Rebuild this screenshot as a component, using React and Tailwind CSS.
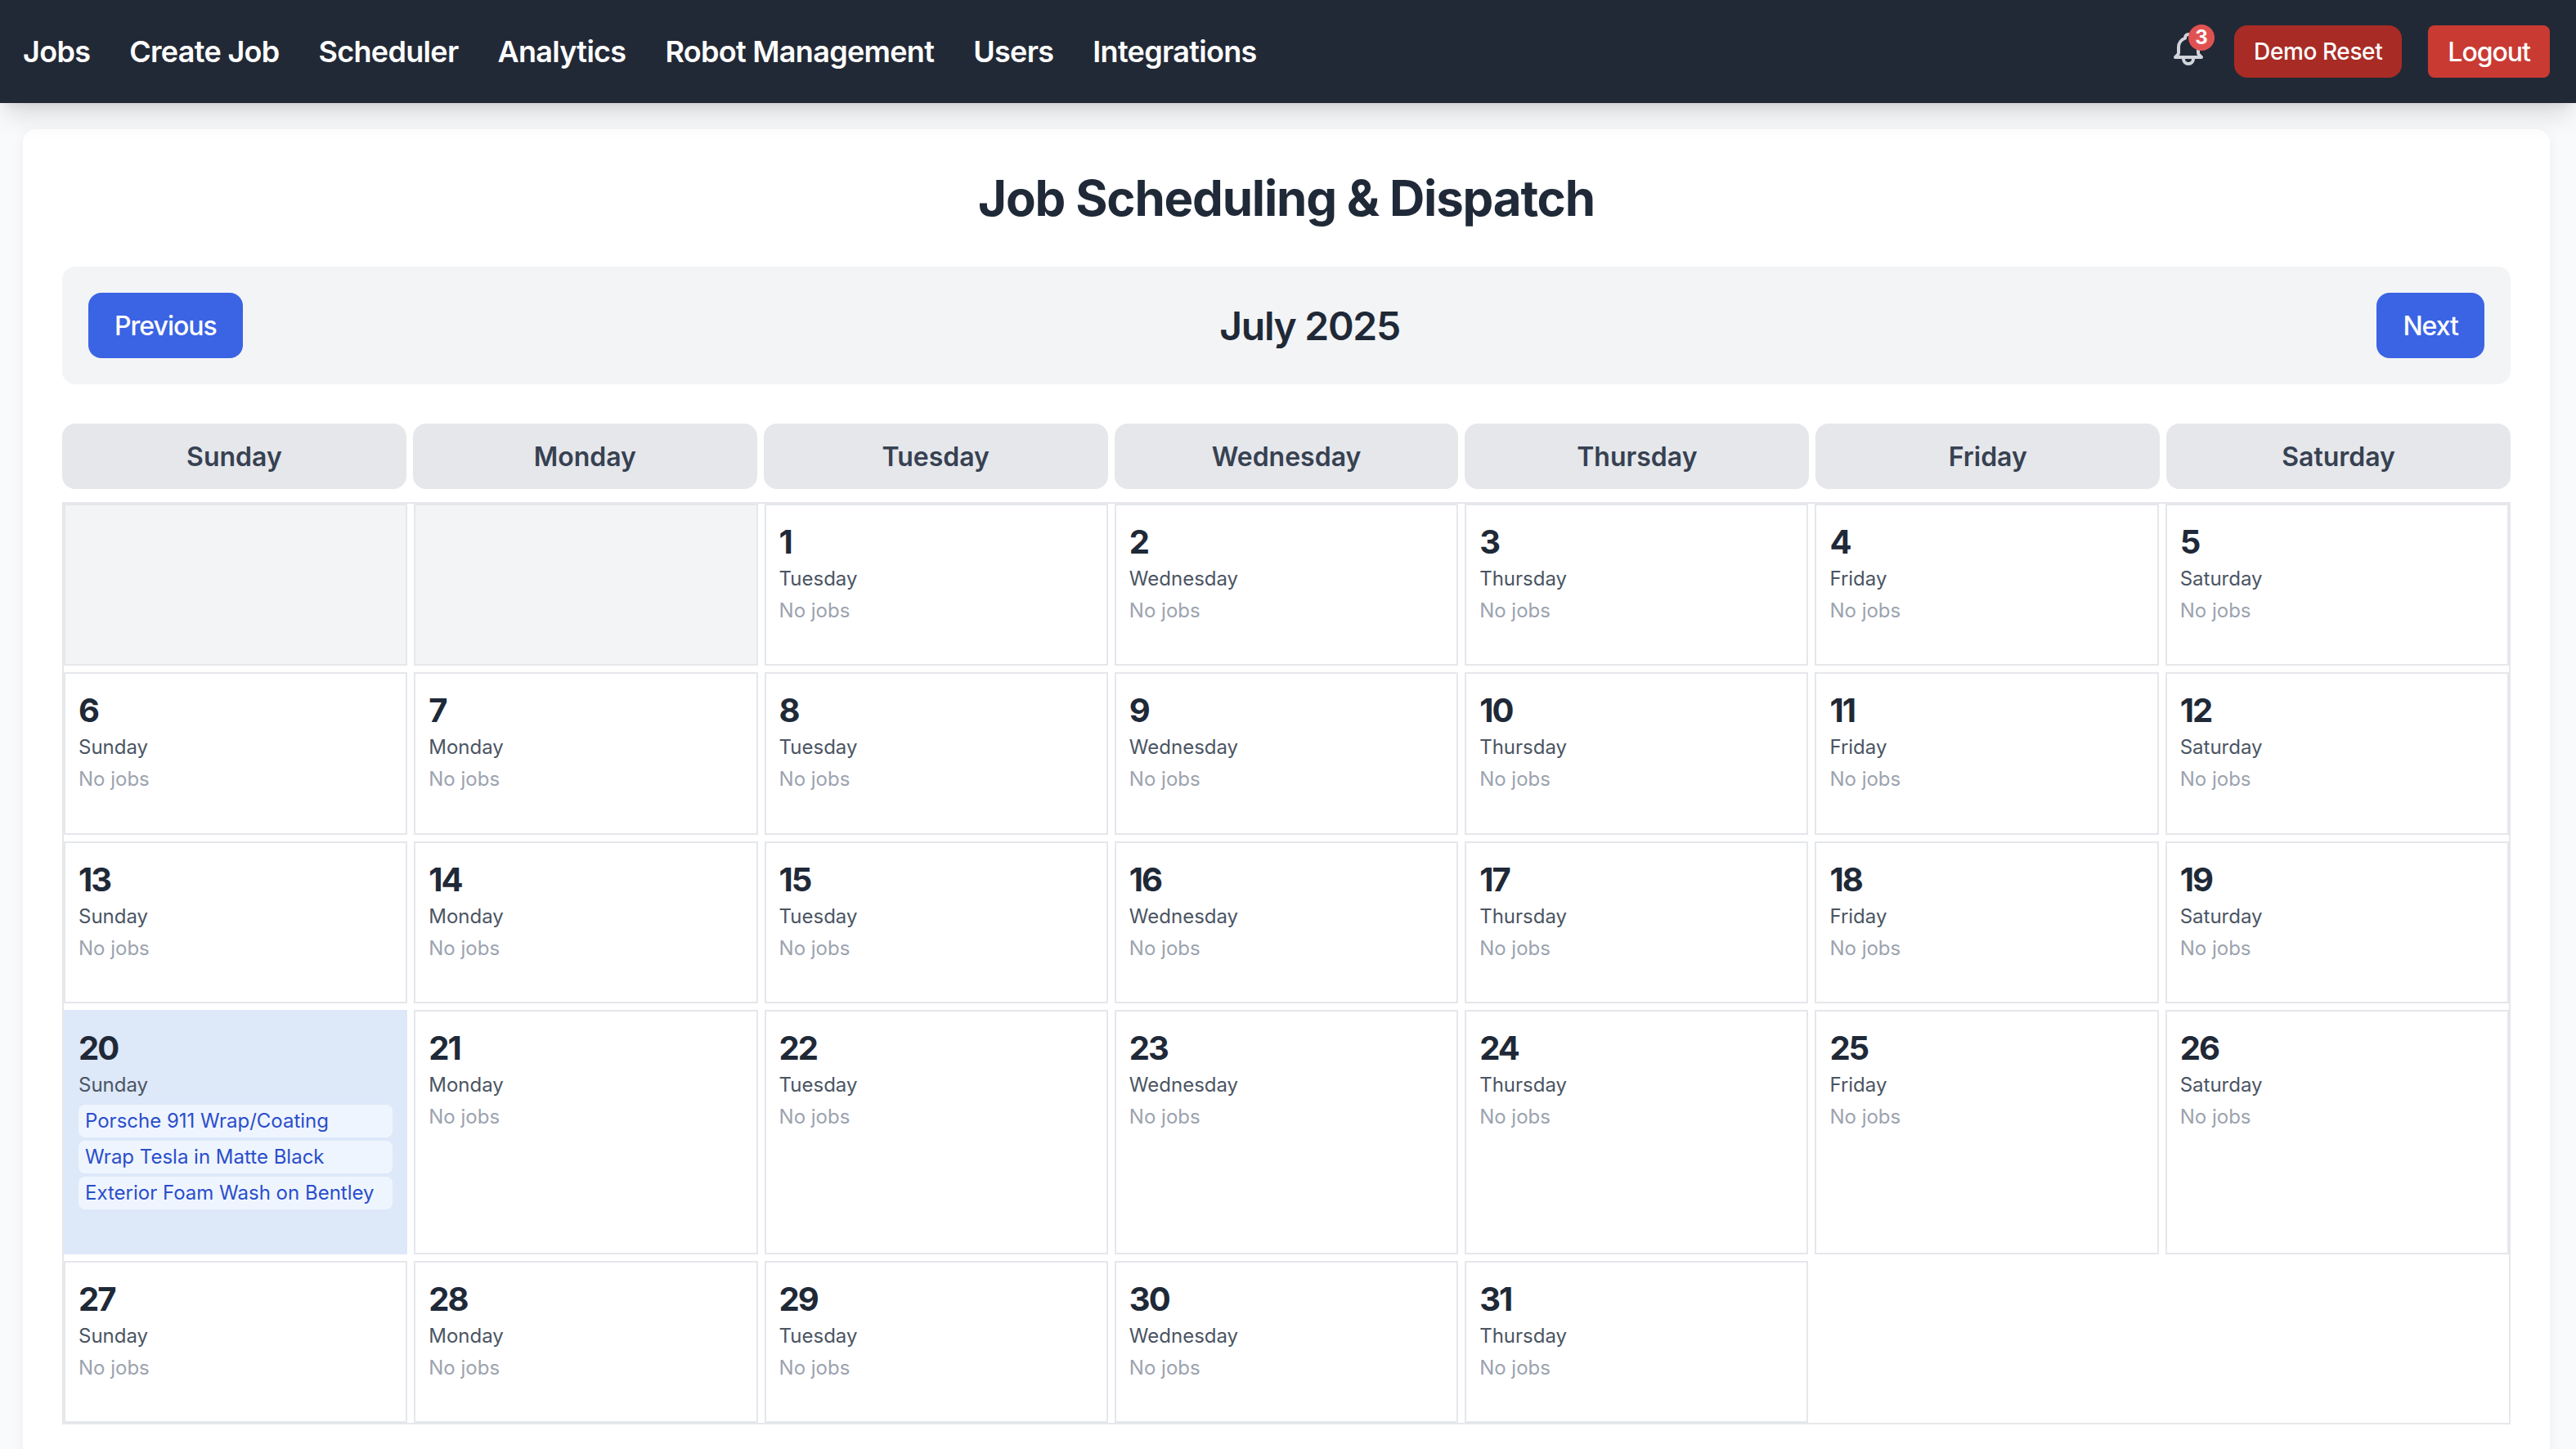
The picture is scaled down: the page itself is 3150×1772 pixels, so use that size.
import React from 'react';

const navLinks = ['Jobs', 'Create Job', 'Scheduler', 'Analytics', 'Robot Management', 'Users', 'Integrations'];
const weekDays = ['Sunday', 'Monday', 'Tuesday', 'Wednesday', 'Thursday', 'Friday', 'Saturday'];
const jobsByDate = {
  20: ['Porsche 911 Wrap/Coating', 'Wrap Tesla in Matte Black', 'Exterior Foam Wash on Bentley'],
};

function Navbar() {
  return (
    <nav className="flex h-[126px] items-center justify-between bg-[#222936] pl-[28px] pr-[32px] shadow-[0_20px_30px_-6px_rgba(0,0,0,0.13),0_8px_12px_-8px_rgba(0,0,0,0.1)] relative">
      <div className="flex items-center gap-[48px]">
        {navLinks.map((link) => (
          <a key={link} className="text-[36px] leading-[56px] font-semibold tracking-[-0.7px] text-white">{link}</a>
        ))}
      </div>
      <div className="flex items-center gap-[32px]">
        <div className="relative h-[48px] w-[48px] -translate-y-[3px]">
          <svg viewBox="0 0 24 24" fill="none" stroke="#d1d5db" strokeWidth="2" strokeLinecap="round" strokeLinejoin="round" className="h-[48px] w-[48px]">
            <path d="M15 17h5l-1.405-1.405A2.032 2.032 0 0118 14.158V11a6.002 6.002 0 00-4-5.659V5a2 2 0 10-4 0v.341C7.67 6.165 6 8.388 6 11v3.159c0 .538-.214 1.055-.595 1.436L4 17h5m6 0v1a3 3 0 11-6 0v-1m6 0H9" />
          </svg>
          <span className="absolute right-[-8px] top-[-6px] flex h-[32px] w-[32px] items-center justify-center rounded-full bg-[#e05252] text-[24px] font-bold leading-none text-white">3</span>
        </div>
        <button className="h-[64px] rounded-[16px] bg-[#a82c25] px-[24px] text-[28px] font-medium leading-[40px] tracking-[-0.4px] text-white">Demo Reset</button>
        <button className="h-[64px] rounded-[8px] bg-[#c93a32] px-[24px] pt-[2px] text-[32px] font-medium leading-[48px] tracking-[-1px] text-white">Logout</button>
      </div>
    </nav>
  );
}

function DayCell({ date }) {
  if (!date) {
    return <div className="min-h-[198.4px] border-2 border-[#e5e7eb] bg-[#f3f4f6]" />;
  }
  const jobs = jobsByDate[date] || [];
  const dayName = weekDays[(date + 1) % 7];
  const hasJobs = jobs.length > 0;
  return (
    <div className={hasJobs ? 'min-h-[298.8px] border-2 border-[#dde8f9] bg-[#dde8f9] p-[16px]' : 'min-h-[198.4px] border-2 border-[#e5e7eb] bg-white p-[16px]'}>
      <div className="pt-[1px] text-[40px] font-bold leading-[56px] tracking-[-2px] text-[#1f2937]">{date}</div>
      <div className="mt-[1px] text-[24px] leading-[32px] text-[#4b5563]">{dayName}</div>
      {hasJobs ? (
        <div className="mt-[8px] flex flex-col gap-[4px]">
          {jobs.map((job) => (
            <div key={job} className="rounded-[8px] bg-[#eff5fe] px-[8px] py-[4px] text-[24px] leading-[32px] text-[#2a4ecb]">{job}</div>
          ))}
        </div>
      ) : (
        <div className="mt-[7px] text-[24px] leading-[32px] text-[#9ca3af]">No jobs</div>
      )}
    </div>
  );
}

export default function App() {
  const cells = [null, null];
  for (let d = 1; d <= 31; d++) cells.push(d);

  return (
    <div className="h-[1772px] overflow-hidden bg-[#f9fafb] font-['Inter',sans-serif] antialiased">
      <Navbar />
      <main className="pl-[28px] pr-[32px] pt-[32px]">
        <div className="rounded-[16px] bg-white p-[48px] shadow-[0_4px_16px_rgba(0,0,0,0.06)]">
          <h1 className="mb-[48px] text-center text-[60px] font-bold leading-[72px] tracking-[-1.2px] text-[#1f2937]">Job Scheduling &amp; Dispatch</h1>

          <div className="mb-[48px] flex items-center justify-between rounded-[16px] bg-[#f3f4f6] p-[32px]">
            <button className="h-[80px] rounded-[16px] bg-[#3b64e4] px-[32px] pt-[2px] text-[32px] font-medium leading-[48px] tracking-[-1px] text-white">Previous</button>
            <h2 className="pt-[1px] text-[48px] font-semibold leading-[64px] tracking-[-1.3px] text-[#1f2937]">July 2025</h2>
            <button className="h-[80px] rounded-[16px] bg-[#3b64e4] px-[32px] pt-[2px] text-[32px] font-medium leading-[48px] tracking-[-1px] text-white">Next</button>
          </div>

          <div className="mb-[16px] grid grid-cols-7 gap-[8px]">
            {weekDays.map((day) => (
              <div key={day} className="flex h-[80px] items-center justify-center rounded-[16px] bg-[#e5e7eb] pt-[1px] text-[32px] font-semibold text-[#374151]">{day}</div>
            ))}
          </div>

          <div className="grid grid-cols-7 gap-[8px] border-2 border-[#e5e7eb]">
            {cells.map((date, i) => (
              <DayCell key={i} date={date} />
            ))}
          </div>
        </div>
      </main>
    </div>
  );
}
